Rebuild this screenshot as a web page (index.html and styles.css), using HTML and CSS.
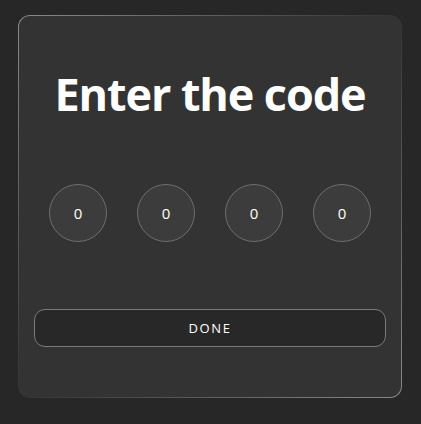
FILE: index.html
```html
<!DOCTYPE html>
<html>
<head>
<meta charset="utf-8">
<link rel="stylesheet" href="styles.css">
</head>
<body>
<div class="card">
  <h1 class="title">Enter the code</h1>
  <div class="digits">
    <div class="digit">0</div>
    <div class="digit">0</div>
    <div class="digit">0</div>
    <div class="digit">0</div>
  </div>
  <button class="done">DONE</button>
</div>
</body>
</html>
```
FILE: styles.css
```css
html, body {
  margin: 0;
  padding: 0;
  background: #272727;
  width: 421px;
  height: 424px;
  overflow: hidden;
}
body {
  padding: 15px 0 0 18px;
  box-sizing: border-box;
  font-family: "Open Sans", sans-serif;
}
.card {
  width: 384px;
  height: 383px;
  box-sizing: border-box;
  border: 1px solid transparent;
  border-radius: 12px;
  background:
    linear-gradient(#333333, #333333) padding-box,
    linear-gradient(135deg, #8a8a8a 0%, rgba(120,120,120,0.15) 50%, #8a8a8a 100%) border-box;
  display: flex;
  flex-direction: column;
  align-items: center;
  padding: 0 15px;
}
.title {
  margin: 48px 0 0;
  color: #ffffff;
  font-size: 45px;
  font-weight: 700;
  letter-spacing: -1.1px;
  line-height: 60px;
}
.digits {
  display: flex;
  gap: 30px;
  margin-top: 60px;
}
.digit {
  width: 58px;
  height: 58px;
  box-sizing: border-box;
  border: 1px solid #6e6e6e;
  border-radius: 50%;
  background: #3c3c3c;
  color: #ffffff;
  font-size: 15px;
  display: flex;
  align-items: center;
  justify-content: center;
}
.done {
  margin-top: 67px;
  width: 352px;
  height: 38px;
  border: 1px solid #7a7a7a;
  border-radius: 11px;
  background: #282828;
  color: #ffffff;
  font-family: "Open Sans", sans-serif;
  font-size: 13px;
  font-weight: 500;
  letter-spacing: 1.6px;
}
```
